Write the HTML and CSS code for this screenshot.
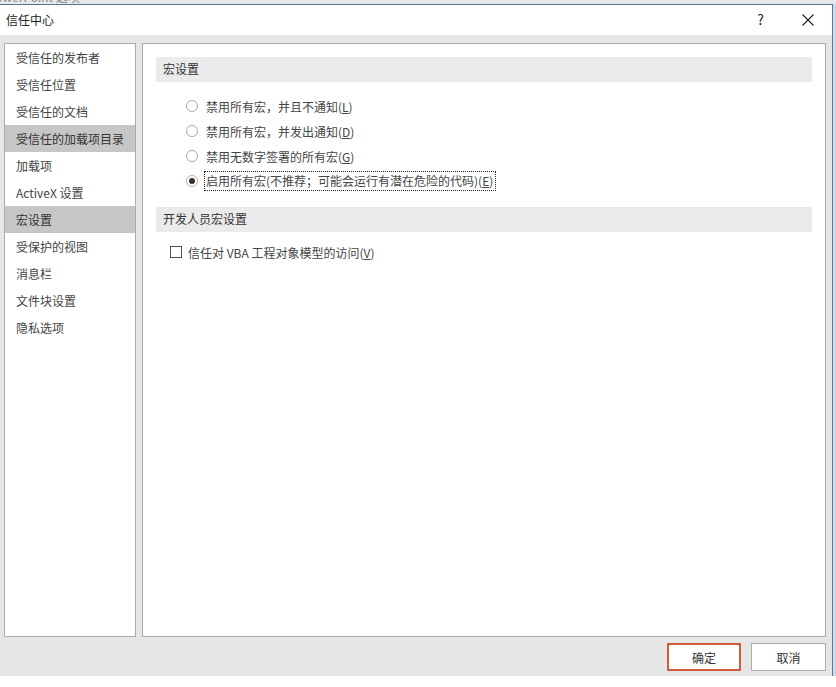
FILE: index.html
```html
<!DOCTYPE html>
<html lang="zh-CN">
<head>
<meta charset="utf-8">
<title>信任中心</title>
<link rel="stylesheet" href="styles.css">
</head>
<body>
<div class="screen">
  <div class="backdrop"><span class="backdrop-title">PowerPoint 选项</span></div>
  <div class="row">
    <div class="dialog">
      <div class="titlebar">
        <span class="title">信任中心</span>
        <span class="help">?</span>
        <svg class="close" width="12" height="12" viewBox="0 0 12 12"><path d="M0.5 0.5 L11.5 11.5 M11.5 0.5 L0.5 11.5" stroke="#222" stroke-width="1.1" fill="none"/></svg>
      </div>
      <div class="body">
        <div class="panels">
          <ul class="nav">
            <li>受信任的发布者</li>
            <li>受信任位置</li>
            <li>受信任的文档</li>
            <li class="sel">受信任的加载项目录</li>
            <li>加载项</li>
            <li>ActiveX 设置</li>
            <li class="sel">宏设置</li>
            <li>受保护的视图</li>
            <li>消息栏</li>
            <li>文件块设置</li>
            <li>隐私选项</li>
          </ul>
          <div class="content">
            <div class="section-head">宏设置</div>
            <div class="options">
              <div class="opt"><span class="radio"></span><span class="label">禁用所有宏，并且不通知(<u>L</u>)</span></div>
              <div class="opt"><span class="radio"></span><span class="label">禁用所有宏，并发出通知(<u>D</u>)</span></div>
              <div class="opt"><span class="radio"></span><span class="label">禁用无数字签署的所有宏(<u>G</u>)</span></div>
              <div class="opt"><span class="radio on"></span><span class="label focus">启用所有宏(不推荐；可能会运行有潜在危险的代码)(<u>E</u>)</span></div>
            </div>
            <div class="section-head second">开发人员宏设置</div>
            <div class="check-row"><span class="checkbox"></span><span class="label">信任对 VBA 工程对象模型的访问(<u>V</u>)</span></div>
          </div>
        </div>
        <div class="buttons">
          <button class="btn primary">确定</button>
          <button class="btn">取消</button>
        </div>
      </div>
    </div>
    <div class="side"></div>
  </div>
</div>
</body>
</html>
```

FILE: styles.css
```css
* { box-sizing: border-box; }
html, body { margin: 0; padding: 0; }
body {
  background: #ffffff;
  font-family: "Microsoft YaHei", "Noto Sans CJK SC", "Noto Sans", sans-serif;
  font-size: 12px;
  color: #444;
  width: 836px;
  height: 687px;
  overflow: hidden;
}
.screen { width: 836px; }
.backdrop {
  height: 4px;
  background: #e9e9e9;
  overflow: hidden;
  position: relative;
}
.backdrop-title {
  position: absolute;
  left: -12px;
  top: -10px;
  font-size: 12px;
  color: #888;
  line-height: 14px;
}
.row { display: flex; }
.dialog {
  width: 833px;
  height: 672px;
  border-top: 1px solid #5a7290;
  border-right: 1px solid #3f82c8;
  display: flex;
  flex-direction: column;
}
.side { flex: 1; background: #d8d8d8; height: 672px; }
.titlebar {
  height: 30px;
  background: #fff;
  display: flex;
  align-items: center;
  padding-left: 6px;
  padding-bottom: 2px;
}
.title { color: #222; font-size: 12px; flex: 1; }
.help { color: #222; font-size: 14px; margin-right: 38px; }
.close { margin-right: 18px; margin-top: 2px; }
.body {
  flex: 1;
  background: #e6e6e6;
  padding: 8px 6px 4px 4px;
  display: flex;
  flex-direction: column;
}
.panels { display: flex; gap: 6px; height: 594px; }
.nav {
  list-style: none;
  margin: 0;
  padding: 0;
  width: 132px;
  background: #fff;
  border: 1px solid #ababab;
}
.nav li {
  height: 27px;
  line-height: 27px;
  padding-left: 11px;
  color: #444;
  white-space: nowrap;
}
.nav li.sel { background: #c6c6c6; color: #333; }
.content {
  flex: 1;
  background: #fff;
  border: 1px solid #ababab;
  padding: 13px 13px 0 13px;
}
.section-head {
  height: 25px;
  line-height: 23px;
  background: #ebebeb;
  padding-left: 7px;
  color: #333;
}
.section-head.second { margin-top: 13px; }
.options { padding-top: 12px; padding-left: 30px; }
.opt {
  height: 25px;
  display: flex;
  align-items: center;
  padding-bottom: 1px;
}
.radio {
  width: 12px;
  height: 12px;
  border: 1px solid #a8a8a8;
  border-radius: 50%;
  margin-right: 8px;
  background: #fff;
  display: inline-flex;
  align-items: center;
  justify-content: center;
}
.radio.on { border-color: #d0a89c; }
.radio.on::after {
  content: "";
  width: 6px;
  height: 6px;
  border-radius: 50%;
  background: #333;
}
.label { color: #444; white-space: nowrap; }
.label u { text-decoration: underline; }
.label.focus {
  border: 1px dotted #222;
  padding: 1px 2px 1px 1px;
  margin-left: -2px;
  line-height: 16px;
}
.check-row {
  margin-top: 8px;
  height: 25px;
  display: flex;
  align-items: center;
  padding-left: 14px;
  padding-bottom: 1px;
}
.checkbox {
  width: 12px;
  height: 12px;
  border: 1px solid #555;
  background: #fff;
  margin-right: 6px;
}
.buttons {
  display: flex;
  justify-content: flex-end;
  gap: 10px;
  margin-top: 6px;
}
.btn {
  font-family: inherit;
  font-size: 12px;
  color: #333;
  height: 28px;
  width: 75px;
  background: #fff;
  border: 1px solid #adadad;
  padding: 0;
}
.btn.primary {
  width: 74px;
  border: 2px solid #d4593a;
}
```
